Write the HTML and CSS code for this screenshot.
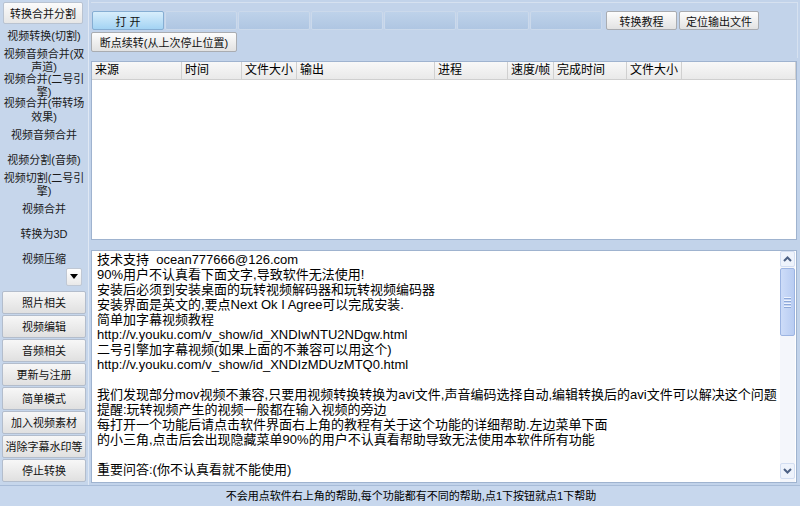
FILE: index.html
```html
<!DOCTYPE html>
<html lang="zh-CN">
<head>
  <meta charset="UTF-8">
  <title>玩转视频</title>
  <link rel="stylesheet" href="styles.css">
</head>
<body>
  <div class="window">
    <div class="content">
      <aside class="sidebar">
        <button class="side-top">转换合并分割</button>
        <div class="menu">
          <div class="menu-item">视频转换(切割)</div>
          <div class="menu-item">视频音频合并(双声道)</div>
          <div class="menu-item">视频合并(二号引擎)</div>
          <div class="menu-item">视频合并(带转场效果)</div>
          <div class="menu-item">视频音频合并</div>
          <div class="menu-item">视频分割(音频)</div>
          <div class="menu-item">视频切割(二号引擎)</div>
          <div class="menu-item">视频合并</div>
          <div class="menu-item">转换为3D</div>
          <div class="menu-item">视频压缩</div>
          <button class="drop">
            <svg width="8" height="5" viewBox="0 0 8 5"><path d="M0 0h8L4 5z" fill="#000"/></svg>
          </button>
        </div>
        <div class="side-buttons">
          <button class="side-btn">照片相关</button>
          <button class="side-btn">视频编辑</button>
          <button class="side-btn">音频相关</button>
          <button class="side-btn">更新与注册</button>
          <button class="side-btn">简单模式</button>
          <button class="side-btn">加入视频素材</button>
          <button class="side-btn">消除字幕水印等</button>
          <button class="side-btn">停止转换</button>
        </div>
      </aside>

      <main class="main">
        <div class="toolbar">
          <div class="tool-row">
            <button class="btn btn-open">打 开</button>
            <button class="btn btn-off"></button>
            <button class="btn btn-off"></button>
            <button class="btn btn-off"></button>
            <button class="btn btn-off"></button>
            <button class="btn btn-off"></button>
            <button class="btn btn-off"></button>
            <button class="btn btn-grey tutorial">转换教程</button>
            <button class="btn btn-grey locate">定位输出文件</button>
          </div>
          <div class="tool-row second">
            <button class="btn btn-grey resume">断点续转(从上次停止位置)</button>
          </div>
        </div>

        <div class="list">
          <div class="list-head">
            <span>来源</span>
            <span>时间</span>
            <span>文件大小</span>
            <span>输出</span>
            <span>进程</span>
            <span>速度/帧</span>
            <span>完成时间</span>
            <span>文件大小</span>
            <span></span>
          </div>
        </div>

        <div class="log">
          <div class="log-text">技术支持  ocean777666@126.com
90%用户不认真看下面文字,导致软件无法使用!
安装后必须到安装桌面的玩转视频解码器和玩转视频编码器
安装界面是英文的,要点Next Ok I Agree可以完成安装.
简单加字幕视频教程
http://v.youku.com/v_show/id_XNDIwNTU2NDgw.html
二号引擎加字幕视频(如果上面的不兼容可以用这个)
http://v.youku.com/v_show/id_XNDIzMDUzMTQ0.html

我们发现部分mov视频不兼容,只要用视频转换转换为avi文件,声音编码选择自动,编辑转换后的avi文件可以解决这个问题
提醒:玩转视频产生的视频一般都在输入视频的旁边
每打开一个功能后请点击软件界面右上角的教程有关于这个功能的详细帮助.左边菜单下面
的小三角,点击后会出现隐藏菜单90%的用户不认真看帮助导致无法使用本软件所有功能

重要问答:(你不认真看就不能使用)</div>
          <div class="scrollbar">
            <div class="arrow">
              <svg width="9" height="6" viewBox="0 0 9 6"><path d="M1 5l3.5-3.5L8 5" fill="none" stroke="#4d6185" stroke-width="2"/></svg>
            </div>
            <div class="track">
              <div class="thumb"><i></i><i></i><i></i><i></i></div>
            </div>
            <div class="arrow">
              <svg width="9" height="6" viewBox="0 0 9 6"><path d="M1 1l3.5 3.5L8 1" fill="none" stroke="#4d6185" stroke-width="2"/></svg>
            </div>
          </div>
        </div>
      </main>
    </div>

    <footer class="status">不会用点软件右上角的帮助,每个功能都有不同的帮助,点1下按钮就点1下帮助</footer>
  </div>
</body>
</html>
```

FILE: styles.css
```css
* {
  box-sizing: border-box;
}
body {
  margin: 0;
  font-family: "Liberation Sans", "Noto Sans CJK SC", sans-serif;
  font-size: 11px;
  color: #000;
  background-color: #c2d3ea;
}
button {
  font-family: inherit;
  font-size: 11px;
  color: #111;
  padding: 0;
  cursor: default;
}
.window {
  width: 800px;
  height: 506px;
  display: flex;
  flex-direction: column;
}
.content {
  flex: 1;
  display: flex;
  min-height: 0;
}

/* left menu */
.sidebar {
  width: 89px;
  padding: 2px 2px 0;
  background-color: #c6d6eb;
  border-right: 1px solid #dfe8f4;
  display: flex;
  flex-direction: column;
}
.side-top {
  margin-left: 1px;
  width: 80px;
  height: 22px;
  background: linear-gradient(#fbfbfb, #e6e6e6);
  border: 1px solid #b9c3d1;
  border-radius: 2px;
}
.menu {
  display: flex;
  flex-direction: column;
}
.menu-item {
  height: 24.8px;
  display: flex;
  align-items: center;
  justify-content: center;
  text-align: center;
  line-height: 13.5px;
  color: #1a1a1a;
}
.drop {
  align-self: flex-end;
  margin: -4px 4px 0 0;
  width: 16px;
  height: 18px;
  background: linear-gradient(#ffffff, #e9e9e9);
  border: 1px solid #c0c8d4;
  border-radius: 2px;
  display: flex;
  align-items: center;
  justify-content: center;
}
.side-buttons {
  margin-top: 5px;
  display: flex;
  flex-direction: column;
  gap: 1px;
}
.side-btn {
  height: 23px;
  background: linear-gradient(#f7f7f7, #e0e0e0);
  border: 1px solid #b3bdcc;
  border-radius: 2px;
}

/* main area */
.main {
  flex: 1;
  padding: 0 3px 2px 2px;
  display: flex;
  flex-direction: column;
}
.toolbar {
  height: 58px;
  margin-top: 2px;
  margin-right: -1px;
  padding-top: 8px;
  border-top: 1px solid #d6e1f0;
  border-right: 1px solid #d6e1f0;
  height: 56px;
}
.tool-row {
  display: flex;
  gap: 1px;
  padding-left: 1px;
}
.tool-row.second {
  margin-top: 2px;
  padding-left: 0;
}
.btn {
  width: 72px;
  height: 19px;
  border-radius: 2px;
}
.btn-open {
  background: linear-gradient(#d8eefc, #a3d3f3);
  border: 1px solid #86aed3;
}
.btn-off {
  background: linear-gradient(#bed2ea, #afc6e2);
  border: 1px solid #cbd9eb;
}
.btn-grey {
  background: linear-gradient(#fdfdfd, #e2e2e2);
  border: 1px solid #a9acb1;
}
.tutorial {
  margin-left: 3px;
  width: 71px;
}
.locate {
  margin-left: 1px;
  width: 80px;
}
.resume {
  width: 146px;
  height: 20px;
}

.list {
  margin-top: 3px;
  height: 179px;
  background-color: #fff;
  border: 1px solid #9fb3cf;
}
.list-head {
  display: grid;
  grid-template-columns: 90px 60px 55px 138px 73px 46px 73px 55px 1fr;
  height: 18px;
}
.list-head span {
  background: linear-gradient(#f8f8f8, #e9e9e9);
  border-right: 1px solid #d0d0d0;
  border-bottom: 1px solid #cfcfcf;
  padding-left: 3px;
  font-size: 12px;
  line-height: 17px;
}

.log {
  margin-top: 10px;
  height: 233px;
  display: flex;
  background-color: #fff;
  border: 1px solid #9fb3cf;
}
.log-text {
  flex: 1;
  padding: 1px 0 0 5px;
  font-size: 13px;
  line-height: 15px;
  white-space: pre;
  overflow: hidden;
}
.scrollbar {
  width: 15px;
  margin-right: 1px;
  padding-bottom: 3px;
  display: flex;
  flex-direction: column;
  background-color: #f4f6fb;
}
.arrow {
  height: 16px;
  display: flex;
  align-items: center;
  justify-content: center;
  background-color: #eef3fc;
  border: 1px solid #d3def2;
  border-radius: 2px;
}
.track {
  flex: 1;
  padding-top: 1px;
}
.thumb {
  height: 68px;
  background: linear-gradient(90deg, #cddcf8, #b8ccf2);
  border: 1px solid #9cb4e2;
  border-radius: 2px;
  display: flex;
  flex-direction: column;
  align-items: center;
  justify-content: center;
  gap: 1px;
}
.thumb i {
  width: 7px;
  height: 1px;
  background-color: #eef3fd;
  border-bottom: 1px solid #8ea8d8;
  height: 2px;
}

.status {
  height: 21px;
  padding-left: 22px;
  border-top: 1px solid #a8bcd8;
  background-color: #c7d7ed;
  text-align: center;
  line-height: 20px;
}
```
